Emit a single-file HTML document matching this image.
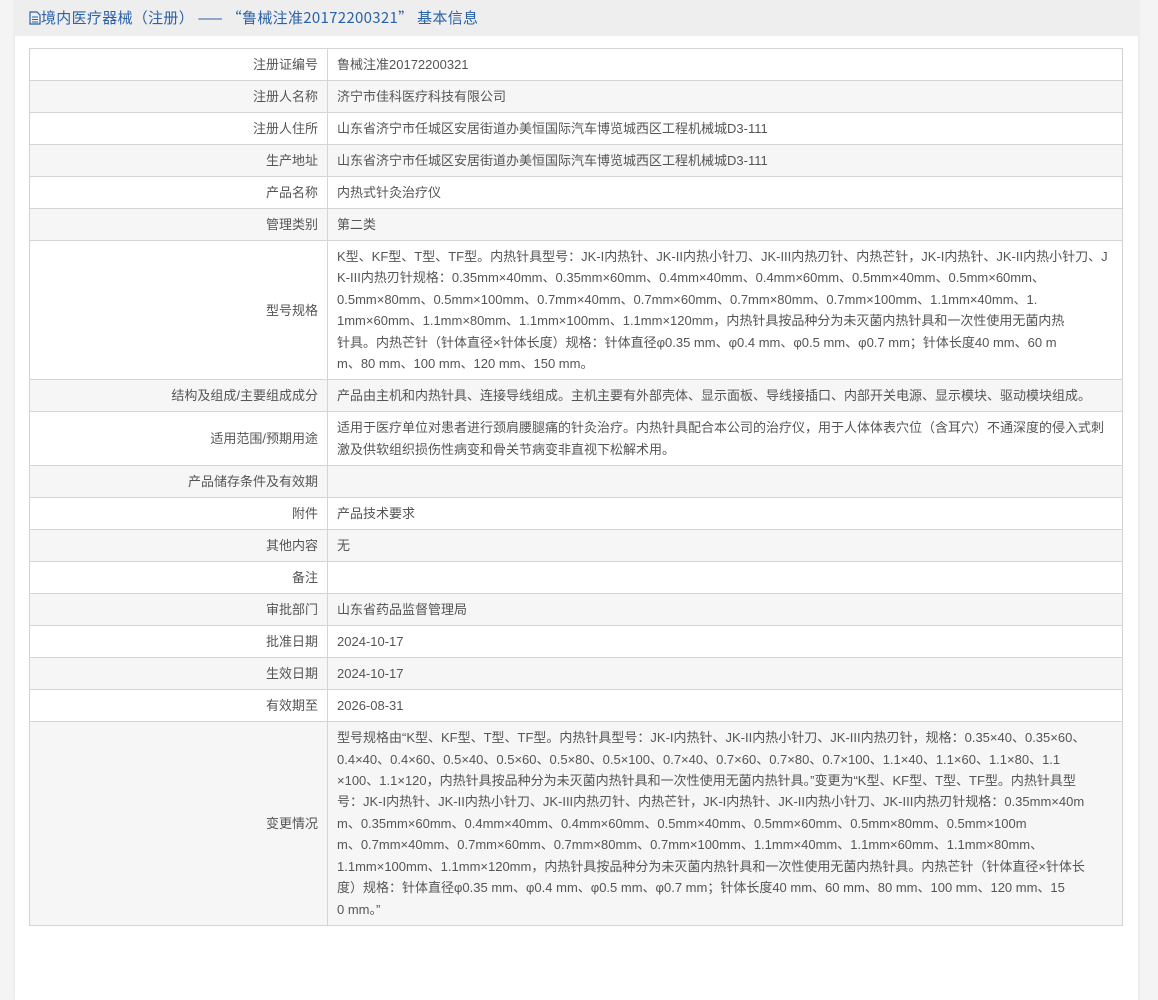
<!DOCTYPE html>
<html><head><meta charset="utf-8"><style>
body{margin:0;background:#f4f4f4;font-family:"Liberation Sans","Noto Sans CJK SC",sans-serif;font-size:13px;color:#555;width:1158px;height:894px;overflow:hidden}
.panel{position:absolute;left:15px;top:0;width:1123px;height:1000px;background:#fff;box-shadow:0 0 4px rgba(0,0,0,.08)}
.hd{height:36px;background:#eeeeee;color:#2a62a8;font-size:15px;line-height:36px;padding-left:14px;font-family:"Noto Sans CJK SC","Liberation Sans",sans-serif;letter-spacing:0.3px;white-space:pre}
table{position:absolute;left:14px;top:48px;width:1094px;border-collapse:collapse}
td{border:1px solid #d4d4d4;padding:5px 9px;line-height:21.4px;vertical-align:middle;box-sizing:border-box}
td.l{width:298px;text-align:right}
tr:nth-child(even) td{background:#f6f6f6}
tr.s td{height:32px;line-height:20px;padding-top:5px;padding-bottom:5px}
</style></head><body>
<div class="panel">
<div class="hd"><svg width="12" height="14" viewBox="0 0 12 14" style="vertical-align:-2px"><path d="M1 1h7l3 3v9H1z" fill="none" stroke="#2a62a8" stroke-width="1.2"/><path d="M3 6h6M3 8.5h6M3 11h6" stroke="#2a62a8"/></svg>境内医疗器械（注册） —— “鲁械注准20172200321” 基本信息</div>
<table>
<tr class="s"><td class="l">注册证编号</td><td>鲁械注准20172200321</td></tr>
<tr class="s"><td class="l">注册人名称</td><td>济宁市佳科医疗科技有限公司</td></tr>
<tr class="s"><td class="l">注册人住所</td><td>山东省济宁市任城区安居街道办美恒国际汽车博览城西区工程机械城D3-111</td></tr>
<tr class="s"><td class="l">生产地址</td><td>山东省济宁市任城区安居街道办美恒国际汽车博览城西区工程机械城D3-111</td></tr>
<tr class="s"><td class="l">产品名称</td><td>内热式针灸治疗仪</td></tr>
<tr class="s"><td class="l">管理类别</td><td>第二类</td></tr>
<tr><td class="l">型号规格</td><td>K型、KF型、T型、TF型。内热针具型号：JK-I内热针、JK-II内热小针刀、JK-III内热刃针、内热芒针，JK-I内热针、JK-II内热小针刀、J<br>K-III内热刃针规格：0.35mm×40mm、0.35mm×60mm、0.4mm×40mm、0.4mm×60mm、0.5mm×40mm、0.5mm×60mm、<br>0.5mm×80mm、0.5mm×100mm、0.7mm×40mm、0.7mm×60mm、0.7mm×80mm、0.7mm×100mm、1.1mm×40mm、1.<br>1mm×60mm、1.1mm×80mm、1.1mm×100mm、1.1mm×120mm，内热针具按品种分为未灭菌内热针具和一次性使用无菌内热<br>针具。内热芒针（针体直径×针体长度）规格：针体直径φ0.35 mm、φ0.4 mm、φ0.5 mm、φ0.7 mm；针体长度40 mm、60 m<br>m、80 mm、100 mm、120 mm、150 mm。</td></tr>
<tr class="s"><td class="l">结构及组成/主要组成成分</td><td>产品由主机和内热针具、连接导线组成。主机主要有外部壳体、显示面板、导线接插口、内部开关电源、显示模块、驱动模块组成。</td></tr>
<tr><td class="l">适用范围/预期用途</td><td>适用于医疗单位对患者进行颈肩腰腿痛的针灸治疗。内热针具配合本公司的治疗仪，用于人体体表穴位（含耳穴）不通深度的侵入式刺<br>激及供软组织损伤性病变和骨关节病变非直视下松解术用。</td></tr>
<tr class="s"><td class="l">产品储存条件及有效期</td><td></td></tr>
<tr class="s"><td class="l">附件</td><td>产品技术要求</td></tr>
<tr class="s"><td class="l">其他内容</td><td>无</td></tr>
<tr class="s"><td class="l">备注</td><td></td></tr>
<tr class="s"><td class="l">审批部门</td><td>山东省药品监督管理局</td></tr>
<tr class="s"><td class="l">批准日期</td><td>2024-10-17</td></tr>
<tr class="s"><td class="l">生效日期</td><td>2024-10-17</td></tr>
<tr class="s"><td class="l">有效期至</td><td>2026-08-31</td></tr>
<tr><td class="l">变更情况</td><td>型号规格由“K型、KF型、T型、TF型。内热针具型号：JK-I内热针、JK-II内热小针刀、JK-III内热刃针，规格：0.35×40、0.35×60、<br>0.4×40、0.4×60、0.5×40、0.5×60、0.5×80、0.5×100、0.7×40、0.7×60、0.7×80、0.7×100、1.1×40、1.1×60、1.1×80、1.1<br>×100、1.1×120，内热针具按品种分为未灭菌内热针具和一次性使用无菌内热针具。”变更为“K型、KF型、T型、TF型。内热针具型<br>号：JK-I内热针、JK-II内热小针刀、JK-III内热刃针、内热芒针，JK-I内热针、JK-II内热小针刀、JK-III内热刃针规格：0.35mm×40m<br>m、0.35mm×60mm、0.4mm×40mm、0.4mm×60mm、0.5mm×40mm、0.5mm×60mm、0.5mm×80mm、0.5mm×100m<br>m、0.7mm×40mm、0.7mm×60mm、0.7mm×80mm、0.7mm×100mm、1.1mm×40mm、1.1mm×60mm、1.1mm×80mm、<br>1.1mm×100mm、1.1mm×120mm，内热针具按品种分为未灭菌内热针具和一次性使用无菌内热针具。内热芒针（针体直径×针体长<br>度）规格：针体直径φ0.35 mm、φ0.4 mm、φ0.5 mm、φ0.7 mm；针体长度40 mm、60 mm、80 mm、100 mm、120 mm、15<br>0 mm。”</td></tr>
</table>
</div>
</body></html>
